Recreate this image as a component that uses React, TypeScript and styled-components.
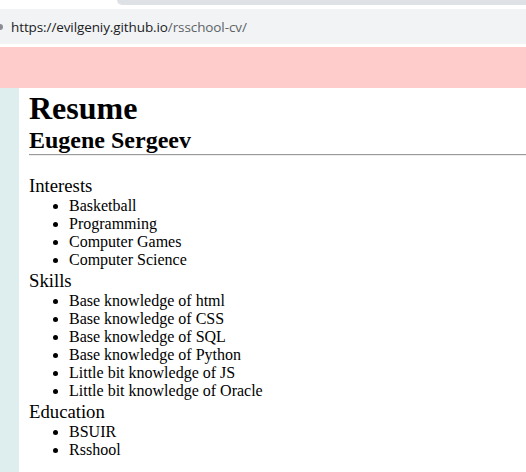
import React from "react";
import styled, { createGlobalStyle } from "styled-components";

const Global = createGlobalStyle`
  html, body { margin: 0; padding: 0; background: #ffffff; }
  body { font-family: "Liberation Serif", "Times New Roman", serif; color: #000; overflow: hidden; }
`;

const Page = styled.div`
  display: flex;
  flex-direction: column;
  width: 526px;
  height: 472px;
  overflow: hidden;
`;

const TabStrip = styled.div`
  height: 8px;
  display: flex;
  justify-content: flex-end;
  background: #ffffff;
`;

const TabEdge = styled.div`
  width: 409px;
  height: 5px;
  background: #dee1e6;
  border-bottom-left-radius: 6px;
`;

const AddressBar = styled.div`
  height: 35px;
  margin-top: 1px;
  background: #f1f3f4;
  display: flex;
  align-items: center;
  padding-left: 11px;
  position: relative;
  font-family: "Open Sans", "Noto Sans", sans-serif;
  font-size: 13.5px;
  letter-spacing: -0.1px;
`;

const SiteIcon = styled.span`
  position: absolute;
  left: -3px;
  top: 15px;
  width: 6px;
  height: 6px;
  border-radius: 50%;
  background: #8a8d91;
`;

const Host = styled.span`
  color: #202124;
`;

const PathPart = styled.span`
  color: #5f6368;
`;

const Banner = styled.div`
  height: 41px;
  margin-top: 3px;
  background: #ffcccc;
`;

const Main = styled.div`
  flex: 1;
  display: flex;
`;

const Sidebar = styled.div`
  width: 19px;
  background: #deeded;
`;

const Content = styled.div`
  flex: 1;
  padding-left: 10px;
`;

const Title = styled.h1`
  margin: 2px 0 0;
  font-size: 32px;
  font-weight: bold;
`;

const Name = styled.h2`
  margin: 0;
  font-size: 24px;
  font-weight: bold;
`;

const Rule = styled.hr`
  margin: 0 0 19px;
  height: 0;
  border: none;
  border-top: 1px solid #9a9a9a;
  border-bottom: 1px solid #eeeeee;
`;

const Section = styled.h3`
  margin: 1px 0 0;
  font-size: 18.72px;
  line-height: 22px;
  font-weight: normal;
`;

const List = styled.ul`
  margin: 0;
  padding-left: 40px;
  list-style: disc;
`;

const Item = styled.li`
  font-size: 16px;
  line-height: 18px;
`;

const sections = [
  {
    title: "Interests",
    items: ["Basketball", "Programming", "Computer Games", "Computer Science"],
  },
  {
    title: "Skills",
    items: [
      "Base knowledge of html",
      "Base knowledge of CSS",
      "Base knowledge of SQL",
      "Base knowledge of Python",
      "Little bit knowledge of JS",
      "Little bit knowledge of Oracle",
    ],
  },
  {
    title: "Education",
    items: ["BSUIR", "Rsshool"],
  },
];

export default function App() {
  return (
    <>
      <Global />
      <Page>
        <TabStrip>
          <TabEdge />
        </TabStrip>
        <AddressBar>
          <SiteIcon />
          <Host>https://evilgeniy.github.io</Host>
          <PathPart>/rsschool-cv/</PathPart>
        </AddressBar>
        <Banner />
        <Main>
          <Sidebar />
          <Content>
            <Title>Resume</Title>
            <Name>Eugene Sergeev</Name>
            <Rule />
            {sections.map((s) => (
              <React.Fragment key={s.title}>
                <Section>{s.title}</Section>
                <List>
                  {s.items.map((it) => (
                    <Item key={it}>{it}</Item>
                  ))}
                </List>
              </React.Fragment>
            ))}
          </Content>
        </Main>
      </Page>
    </>
  );
}
